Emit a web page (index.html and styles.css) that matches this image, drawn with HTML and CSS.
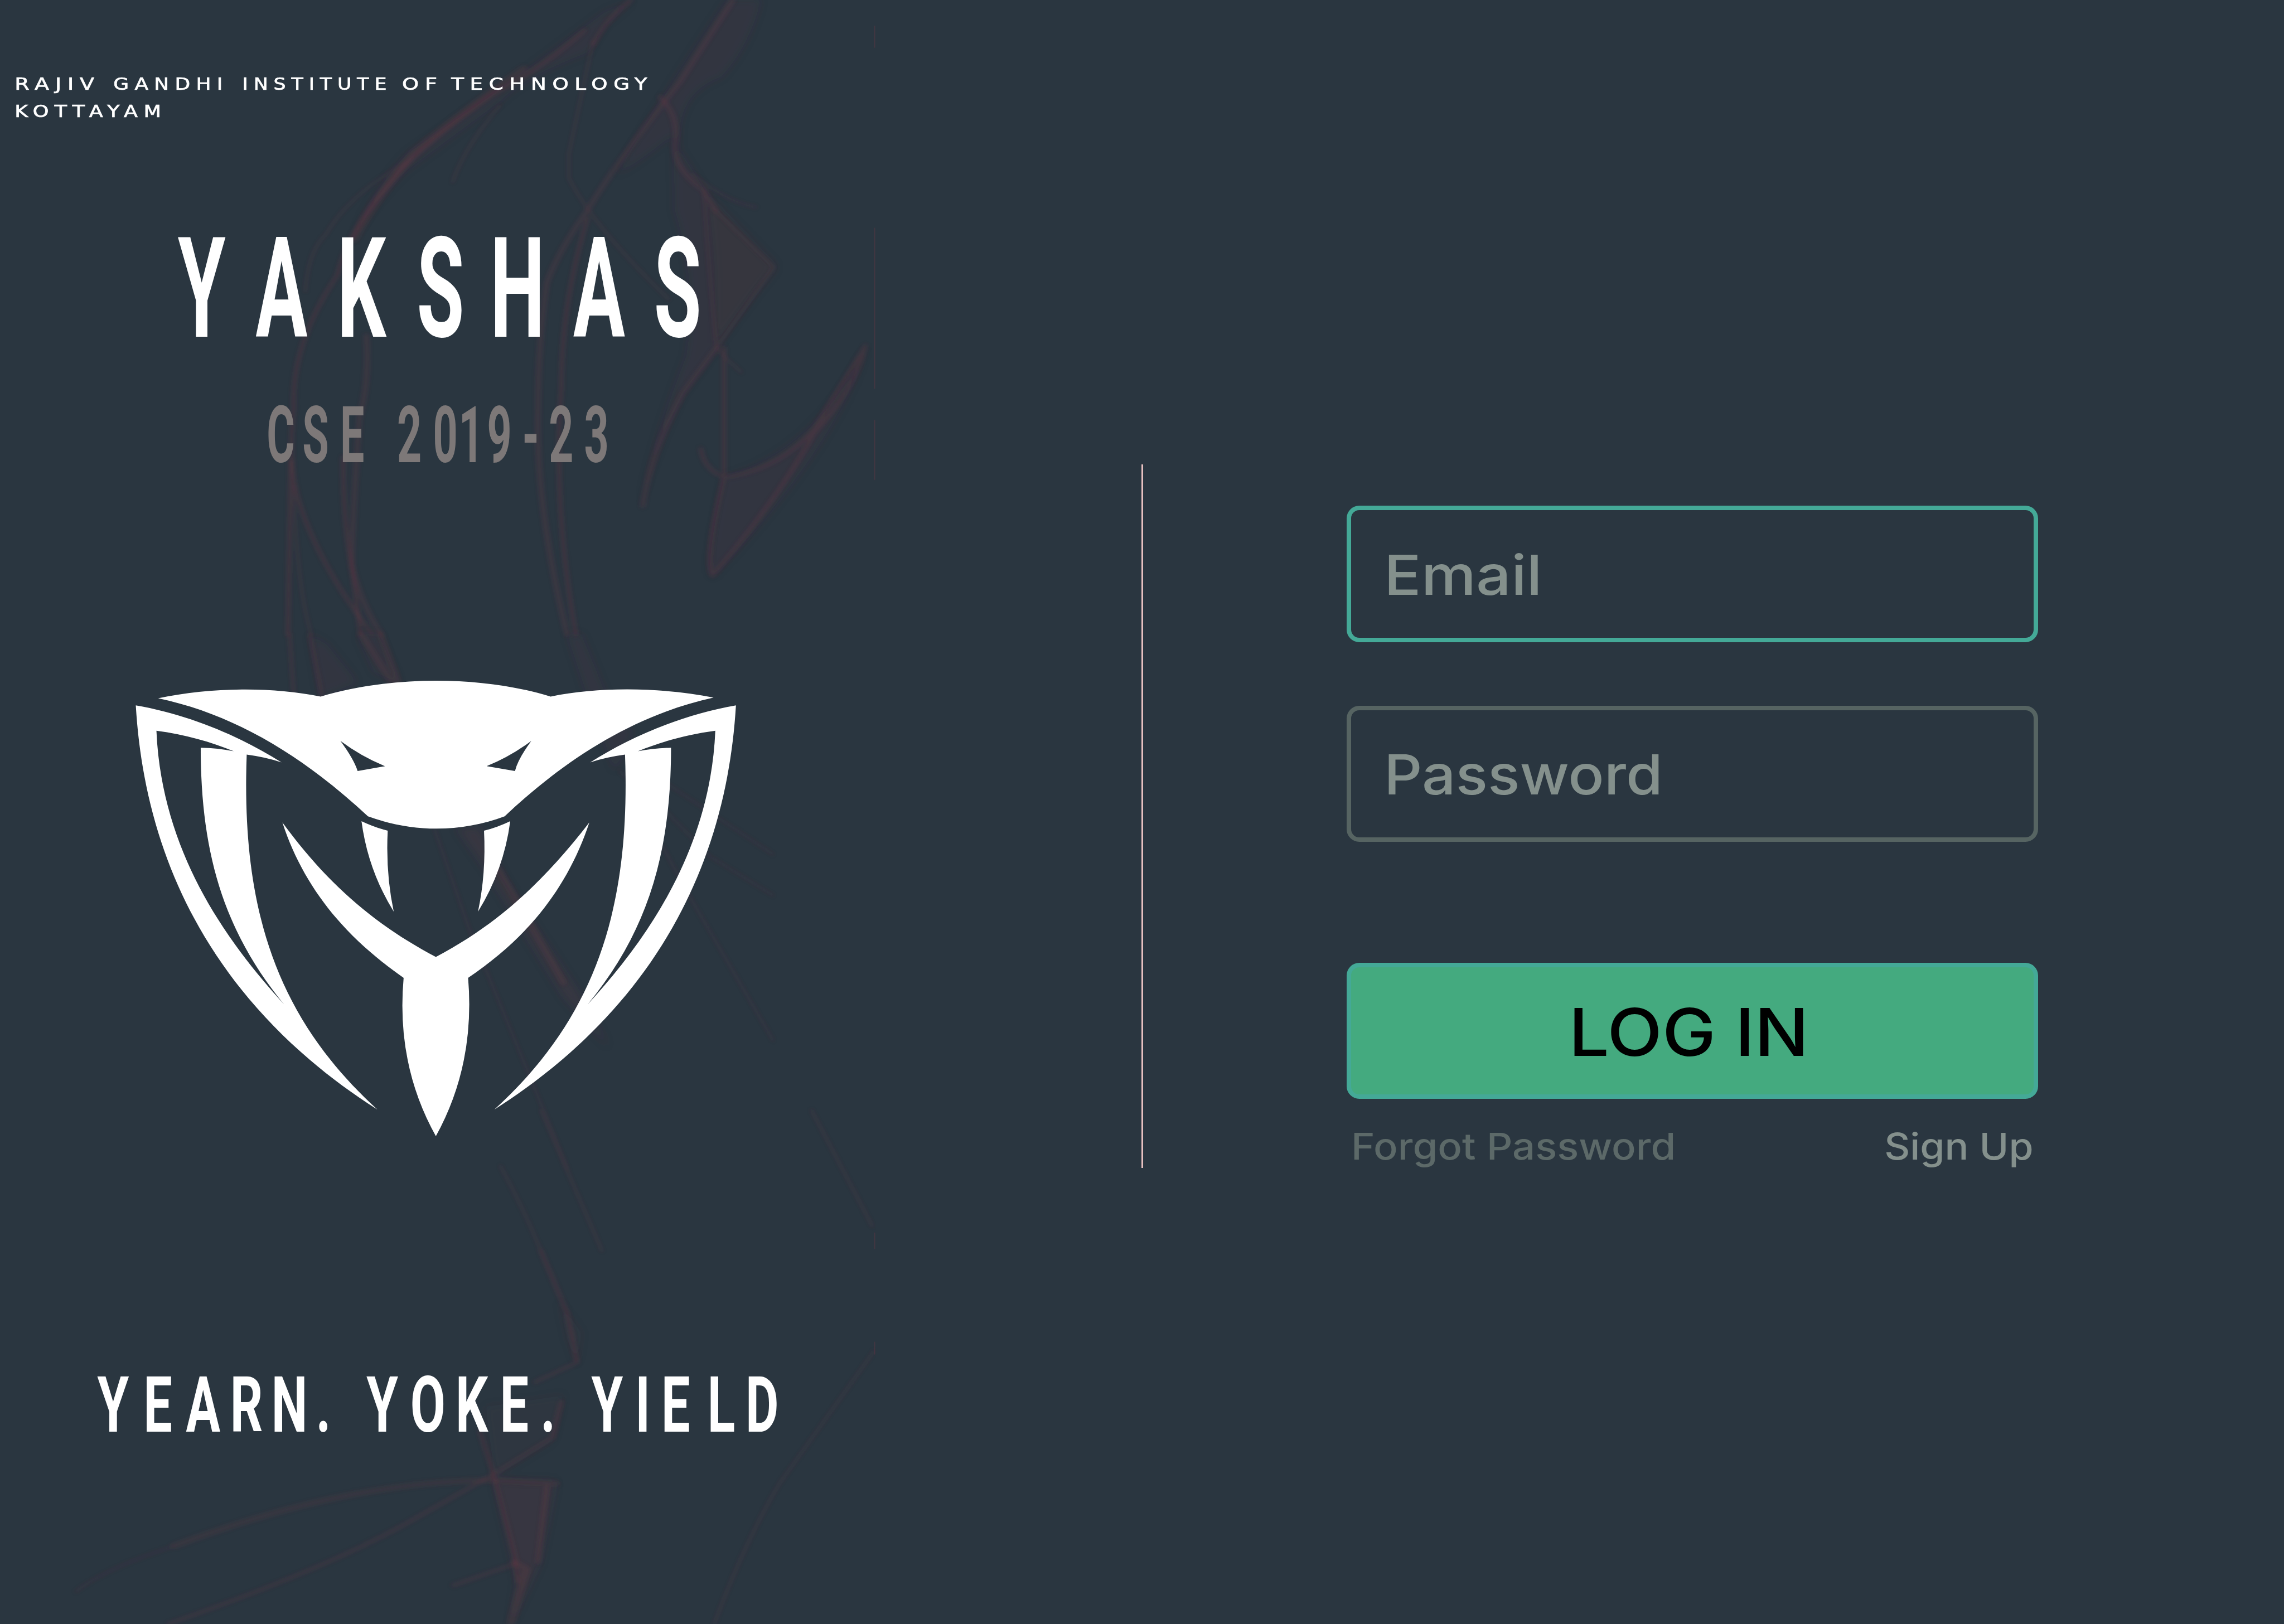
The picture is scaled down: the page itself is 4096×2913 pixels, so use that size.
FILE: index.html
```html
<!DOCTYPE html>
<html lang="en">
<head>
<meta charset="utf-8">
<title>Yakshas – Log in</title>
<link rel="stylesheet" href="styles.css">
</head>
<body>
<main class="page">
  <section class="brand">
    <svg class="smoke" viewBox="0 0 2304 4096" aria-hidden="true">
      <defs>
        <filter id="soft" x="-5%" y="-5%" width="110%" height="110%"><feGaussianBlur stdDeviation="5"/></filter>
        <filter id="softer" x="-10%" y="-10%" width="120%" height="120%"><feGaussianBlur stdDeviation="11"/></filter>
        <clipPath id="edge"><rect width="2208" height="4096"/></clipPath>
      </defs>
      <g clip-path="url(#edge)">
      <g filter="url(#softer)">
        <g transform="scale(1.4668 1.0204)">
          <path class="haze" d="M1250 0 L1308 0 Q1290 110 1240 190 Q1160 230 1168 370 Q1200 440 1215 480 L1335 660 Q1270 770 1232 860 L1175 970 Q1120 1130 1100 1260 Q1120 1100 1180 880 Q1200 700 1160 520 L1158 330 Q1100 400 1060 430 Q1120 280 1250 0Z"/>
          <path class="haze faint" d="M1215 480 L1335 660 L1228 860 Q1235 640 1215 480Z"/>
          <path class="haze" d="M1245 1180 Q1400 1120 1490 855 Q1440 1100 1225 1425 Q1210 1410 1245 1180Z"/>
          <path class="haze" d="M1090 0 L1040 60 L1010 130 Q900 190 860 250 L700 420 Q640 500 600 610 Q640 470 700 380 L900 180 L1040 30Z"/>
        </g>
        <g transform="translate(250 1600) scale(1.0842 .861)">
          <path class="haze" d="M490 0 L530 30 L600 140 L515 185Z M600 0 L650 0 L700 145 L640 110Z M1088 0 L1122 0 L1175 165 L1240 290 L1200 400 L1130 160Z"/>
          <path class="haze deep" d="M830 565 L885 565 L940 710 L1010 850 L1110 1040 L1185 1210 L1080 1060 L900 690Z"/>
        </g>
        <g transform="translate(0 2800) scale(1.4668 .8265)">
          <path class="haze faint" d="M960 580 L1000 680 L992 780 L975 700Z M835 905 L970 870 L950 1010 L850 1120Z"/>
          <path class="haze deep" d="M850 1130 L955 1135 L928 1380 L878 1568 L890 1440Z"/>
        </g>
      </g>
      <g filter="url(#soft)">
        <g transform="scale(1.4668 1.0204)">
          <path class="s5" d="M1085 0 Q1040 50 1020 110 M1005 75 Q930 170 850 230 Q740 340 690 420 Q600 560 580 680 Q500 850 505 1010 Q495 1130 510 1220 Q540 1380 640 1568"/>
          <path class="s9" d="M900 170 Q800 270 710 380 Q640 500 610 590"/>
          <path class="s3" d="M860 260 Q800 360 778 450 M700 400 Q600 480 560 580 Q530 620 525 720 M1020 100 Q1000 230 978 380 L978 440 Q1020 560 1150 740"/>
          <path class="s6" d="M1260 0 Q1210 110 1170 200 Q1060 400 1010 520 Q960 620 940 700 Q925 850 925 1010 Q920 1250 975 1568"/>
          <path class="s5" d="M1010 540 Q965 750 965 960 Q950 1250 990 1568"/>
          <path class="s6" d="M1135 240 Q1170 290 1160 360 Q1160 420 1210 470 L1230 520 M1232 860 L1175 970 Q1120 1110 1105 1250"/>
          <path class="s3" d="M1230 520 L1330 660 L1232 860 M1190 430 Q1250 500 1300 512 M1232 860 Q1250 890 1275 920 M1210 470 Q1220 700 1232 860"/>
          <path class="s5" d="M1245 860 L1245 1180 M1205 1110 Q1210 1160 1245 1180 Q1340 1160 1400 1060 L1488 855 Q1470 960 1400 1070 Q1330 1250 1225 1422 Q1210 1380 1245 1180"/>
          <path class="s6" d="M630 830 Q635 950 618 1030 Q605 1300 605 1400 Q620 1490 655 1568"/>
          <path class="s5" d="M590 1130 Q590 1300 605 1400 L620 1568 M500 1140 L495 1568"/>
          <path class="s3" d="M505 1200 Q510 1450 535 1568"/>
        </g>
        <g transform="translate(250 1600) scale(1.0842 .861)">
          <path class="s9" d="M610 0 L680 140 M655 0 L695 140 M930 690 L1000 840 L1080 1020"/>
          <path class="s5" d="M443 0 L452 170 M490 0 L518 180"/>
          <path class="s3" d="M1210 400 L1320 520 L1420 650 L1568 765 M1310 620 L1370 760 L1568 1190 M780 570 L860 860 L1000 1290 L1090 1568 M1300 420 L1568 645"/>
        </g>
        <g transform="translate(0 2800) scale(1.4668 .8265)">
          <path class="s3" d="M930 0 L1035 430 M1395 0 L1500 355 M1503 735 L1340 1140 Q1280 1320 1228 1568 M860 170 Q900 300 930 430"/>
          <path class="s5" d="M930 430 L975 620 L992 770 L920 830 M965 890 L950 1000 L855 1105 L700 1260 Q560 1400 290 1568"/>
          <path class="s5" d="M825 980 L848 1110 L885 1360 L890 1440"/>
          <path class="s9" d="M955 1140 L850 1130 Q600 1130 300 1330"/>
          <path class="s3" d="M300 1330 Q180 1400 130 1470"/>
          <path class="s9" d="M885 1380 L905 1400 L878 1568"/>
          <path class="s6" d="M885 1385 L780 1450 M940 1150 L925 1380"/>
        </g>
      </g>
      <path class="seam" d="M2206 65V120M2206 575V980M2206 1060V1210M2206 3110V3150M2206 3385V3415"/>
      </g>
    </svg>

    <svg class="lettering" viewBox="0 0 2304 1560">
      <g class="college">
        <text x="37" y="226" textLength="216" lengthAdjust="spacingAndGlyphs">RAJIV</text>
        <text x="286" y="226" textLength="290" lengthAdjust="spacingAndGlyphs">GANDHI</text>
        <text x="611" y="226" textLength="378" lengthAdjust="spacingAndGlyphs">INSTITUTE</text>
        <text x="1014" y="226" textLength="104" lengthAdjust="spacingAndGlyphs">OF</text>
        <text x="1138" y="226" textLength="509" lengthAdjust="spacingAndGlyphs">TECHNOLOGY</text>
        <text x="37" y="296" textLength="384" lengthAdjust="spacingAndGlyphs">KOTTAYAM</text>
      </g>
      <text class="title" transform="scale(.55 1)" x="925 1291 1658 2020 2373 2747 3107" y="849">YAKSHAS</text>
      <text class="batch" transform="scale(.55 1)" x="1287 1447 1615 1727 1877 2042 2160 2290 2433 2573 2735" y="1166">CSE 2019-23</text>
    </svg>

    <svg class="cobra" viewBox="0 0 1568 1568" preserveAspectRatio="none" role="img" aria-label="Cobra emblem">
      <defs>
        <g id="side">
          <path fill-rule="evenodd" d="M85 208C210 235 330 300 424 375Q390 360 343 352C330 800 410 1120 647 1392C320 1130 110 740 85 208ZM133 282C145 640 300 905 430 1084C290 870 236 640 236 332Q275 333 313 342C260 315 200 293 133 282Z"/>
          <path d="M610 547Q640 565 671 575Q666 700 685 812Q625 690 610 547Z"/>
        </g>
      </defs>
      <path fill-rule="evenodd" d="M137 187C255 155 400 152 515 182C680 120 890 120 1050 182C1165 152 1310 155 1429 185C1236 238 1076 375 943 533C840 581 730 581 625 533C490 375 330 238 137 187ZM561 312Q610 358 665 386L601 400Q592 365 561 312ZM1005 312Q956 358 901 386L967 400Q974 365 1005 312Z"/>
      <use href="#side"/>
      <use href="#side" transform="translate(1566 0) scale(-1 1)"/>
      <path d="M426 551C530 730 640 850 783 945C925 850 1030 730 1140 551C1090 740 1000 885 858 1006Q875 1260 783 1470Q690 1260 708 1006C570 885 475 740 426 551Z"/>
    </svg>

    <svg class="motto-box" viewBox="0 0 2304 1146">
      <text class="motto" transform="scale(.66 1)" x="432 603 776 942 1106 1236 1343 1461 1635 1803 1965 2094 2206 2320 2456 2582 2756 2912" y="661">YEARN. YOKE. YIELD</text>
    </svg>
  </section>

  <div class="divider"></div>

  <form class="login">
    <div class="field active"><span class="email">Email</span></div>
    <div class="field"><span class="password">Password</span></div>
    <div class="submit"><span>LOG IN</span></div>
    <div class="links"><a class="forgot">Forgot Password</a><a class="signup">Sign Up</a></div>
  </form>
</main>
</body>
</html>
```
FILE: styles.css
```css
:root { --u: calc(4096px / 5760); }
* { box-sizing: border-box; }
body { margin: 0; background: #2a3640; overflow: hidden; }
.page {
  display: grid;
  grid-template-columns: calc(2304 * var(--u)) calc(1154 * var(--u)) 1fr;
  width: 4096px;
  height: 2913px;
  overflow: hidden;
  background: #2a3640;
  font-family: Inter, "Open Sans", sans-serif;
  font-weight: 500;
}

/* Left: emblem and lettering over drifting smoke */
.brand { position: relative; display: flex; flex-direction: column; height: 2913px; }
.brand svg { display: block; width: 100%; flex: none; }
.smoke { position: absolute; inset: 0; height: calc(4096 * var(--u)); }
.smoke path { fill: none; stroke: #863744; stroke-linecap: round; stroke-linejoin: round; }
.smoke .haze { fill: #70343f; fill-opacity: .13; stroke: none; }
.smoke .haze.deep { fill-opacity: .2; }
.smoke .haze.faint { fill-opacity: .08; }
.smoke .s3 { stroke-width: 4; stroke-opacity: .2; }
.smoke .s5 { stroke-width: 8; stroke-opacity: .22; }
.smoke .s6 { stroke-width: 10; stroke-opacity: .19; }
.smoke .s9 { stroke-width: 15; stroke-opacity: .16; }
.smoke .seam { stroke-width: 2; stroke-opacity: .3; }
.brand .lettering { position: relative; height: calc(1560 * var(--u)); margin-bottom: calc(40 * var(--u)); }
.brand .cobra {
  position: relative;
  width: calc(1700 * var(--u));
  height: calc(1350 * var(--u));
  margin-left: calc(250 * var(--u));
  fill: #fff;
}
.brand .motto-box { position: relative; height: calc(1146 * var(--u)); }
.college { font: 400 42px "DejaVu Sans", sans-serif; letter-spacing: 12px; fill: #fff; stroke: #fff; stroke-width: 1; }
.title, .batch, .motto { font-family: Roboto, "Liberation Sans", sans-serif; font-weight: 700; text-anchor: middle; fill: #fff; white-space: pre; }
.title { font-size: 353px; }
.batch { font-size: 197px; fill: #7d7878; }
.motto { font-size: 195px; }

.divider {
  justify-self: center;
  width: 3px;
  height: calc(1774 * var(--u));
  margin-top: calc(1172 * var(--u));
  background: #e6c0c0;
}

/* Right: log-in form */
.login { display: flex; flex-direction: column; width: calc(1744 * var(--u)); margin: calc(1276 * var(--u)) 0 0 calc(-62 * var(--u)); }
.field, .submit {
  display: flex;
  align-items: center;
  height: calc(344 * var(--u));
  border: calc(12 * var(--u)) solid #566462;
  border-radius: calc(32 * var(--u));
}
.field { margin-bottom: calc(160 * var(--u)); padding: calc(3 * var(--u)) 0 0 calc(83 * var(--u)); color: #84908c; font-size: calc(139 * var(--u)); }
.field.active { border-color: #44a997; }
.field span, .links a { transform-origin: left; }
.email { transform: scaleX(1.12); }
.password { transform: scaleX(1.08); }
.submit { justify-content: center; margin-top: calc(144 * var(--u)); padding: calc(5 * var(--u)) calc(18 * var(--u)) 0 0; border-color: #44a997; background: #44aa7f; color: #000; font-size: calc(166 * var(--u)); }
.submit span { transform: scaleX(1.09); }
.links { display: flex; justify-content: space-between; margin-top: calc(57 * var(--u)); padding: 0 calc(12 * var(--u)); font-size: calc(93 * var(--u)); line-height: calc(124 * var(--u)); color: #84908c; }
.forgot { color: #5c6968; transform: scaleX(1.095); }
.links .signup { transform: scaleX(1.08); transform-origin: right; }
```
